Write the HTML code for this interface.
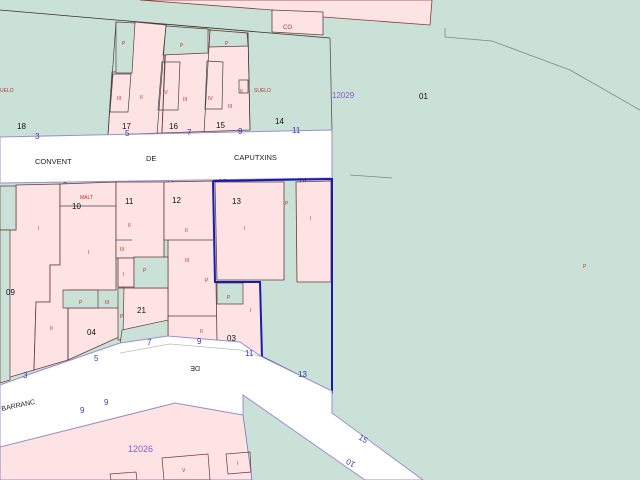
<!DOCTYPE html>
<html><head><meta charset="utf-8"><style>
html,body{margin:0;padding:0;width:640px;height:480px;overflow:hidden;background:#c9e1d6}
svg{display:block}
text{font-family:"Liberation Sans",sans-serif}
</style></head><body>
<svg width="640" height="480" viewBox="0 0 640 480" xmlns="http://www.w3.org/2000/svg">
<rect width="640" height="480" fill="#c9e1d6"/>
<polygon points="140,0 432,0 430,25 323,17 272,10" fill="#fde3e3" stroke="#8a3a3a" stroke-width="0.8"/>
<polygon points="272,10 323,12 323,35 272,32" fill="#fde3e3" stroke="#6a3a3a" stroke-width="0.8"/>
<text x="283" y="29" font-size="6" fill="#c03030">CO</text>
<polyline points="0,10 116,20 330,38" fill="none" stroke="#333" stroke-width="0.8"/>
<line x1="330" y1="38" x2="332" y2="130" stroke="#555" stroke-width="0.8"/>
<polyline points="445,28 445,37 492,41 570,70 640,110" fill="none" stroke="#7a8a8a" stroke-width="0.8"/>
<line x1="350" y1="175" x2="392" y2="178" stroke="#7a8a8a" stroke-width="0.8"/>
<g fill="#fde3e3" stroke="#6a3a3a" stroke-width="0.8">
<polygon points="135,22 166,25 162,133 108,135 112,72 128,72 130,50"/>
<polygon points="166,40 208,36 208,30 248,33 250,130 162,133"/>
</g>
<g fill="#c9e1d6" stroke="#6a3a3a" stroke-width="0.7">
<polygon points="116,22 135,23 132,73 116,73"/>
<polygon points="166,26 208,29 208,53 163,55"/>
<polygon points="210,30 247,33 248,46 209,47"/>
</g>
<g fill="none" stroke="#444" stroke-width="0.7">
<polygon points="113,74 131,74 128,112 110,112"/>
<polygon points="162,62 180,62 178,110 158,110"/>
<polygon points="207,61 223,62 222,109 205,109"/>
<polygon points="239,80 248,80 248,93 239,93"/>
<line x1="116" y1="22" x2="108" y2="135"/>
<line x1="166" y1="25" x2="157" y2="134"/>
<line x1="210" y1="29" x2="204" y2="133"/>
<line x1="248" y1="33" x2="250" y2="130"/>
</g>
<g font-size="5" fill="#c03030">
<text x="122" y="45">P</text><text x="180" y="47">P</text><text x="225" y="45">P</text>
<text x="117" y="100">III</text><text x="140" y="99">II</text><text x="163" y="94">IV</text><text x="183" y="101">III</text>
<text x="208" y="100">IV</text><text x="228" y="108">III</text><text x="240" y="93">II</text>
<text x="254" y="92">SUELO</text><text x="0" y="92">UELO</text>
</g>
<g font-size="8" fill="#111">
<text x="17" y="129">18</text><text x="122" y="129">17</text><text x="169" y="129">16</text>
<text x="216" y="128">15</text><text x="275" y="124">14</text><text x="419" y="99">01</text>
</g>
<text x="332" y="98" font-size="8" fill="#8a5ad0">12029</text>
<text x="583" y="268" font-size="5" fill="#c03030">P</text>
<polygon points="0,137 332,130 332,178 0,183" fill="#fff" stroke="#9a90d0" stroke-width="1"/>
<g font-size="7.5" fill="#222">
<text x="35" y="164">CONVENT</text><text x="146" y="161">DE</text><text x="234" y="160">CAPUTXINS</text>
</g>
<g font-size="8" fill="#3a3ab0">
<text x="35" y="139">3</text><text x="125" y="136">5</text><text x="187" y="135">7</text><text x="238" y="134">9</text><text x="292" y="133">11</text>
<text x="63" y="188">9</text><text x="133" y="188">9</text><text x="166" y="187">10</text><text x="218" y="185">12</text><text x="298" y="184">14</text>
</g>
<g fill="#fde3e3" stroke="#6a3a3a" stroke-width="0.8">
<polygon points="16,185 60,184 60,265 50,265 50,302 36,302 34,370 0,380 0,230 16,230"/>
<polygon points="60,184 116,182 116,290 68,290 68,360 34,370 36,302 50,302 50,265 60,265"/>
<polygon points="68,308 118,308 119,337 68,360"/>
<polygon points="116,182 164,182 164,258 116,258"/>
<polygon points="164,182 213,181 215,282 217,282 218,340 168,338 168,240 164,240"/>
<polygon points="122,288 168,288 168,334 122,340"/>
<polygon points="118,258 134,258 134,287 118,287"/>
<polygon points="216,282 260,282 262,357 240,343 217,340"/>
<polygon points="215,182 284,182 284,280 217,280"/>
<polygon points="296,182 331,181 331,282 297,282"/>
</g>
<g fill="#c9e1d6" stroke="#6a3a3a" stroke-width="0.7">
<polygon points="0,186 16,186 16,230 0,230"/>
<polygon points="63,290 98,290 98,308 63,308"/>
<polygon points="134,257 168,257 168,288 134,288"/>
<polygon points="217,283 243,283 243,304 217,304"/>
<polygon points="118,288 124,288 123,336 120,340 118,340"/>
<polygon points="122,330 168,320 168,338 120,345"/>
<polygon points="0,230 10,230 10,380 0,383"/>
</g>
<g fill="none" stroke="#444" stroke-width="0.7">
<line x1="60" y1="206" x2="116" y2="206"/><line x1="116" y1="240" x2="132" y2="240"/>
<line x1="168" y1="240" x2="213" y2="240"/><line x1="168" y1="316" x2="217" y2="316"/>
<line x1="68" y1="308" x2="68" y2="360"/>
</g>
<g font-size="5" fill="#c03030">
<text x="38" y="230">I</text><text x="88" y="254">I</text><text x="128" y="227">II</text><text x="185" y="232">II</text>
<text x="244" y="230">I</text><text x="285" y="205">P</text><text x="310" y="220">I</text><text x="80" y="199">MALT</text>
<text x="50" y="330">II</text><text x="120" y="251">III</text><text x="123" y="276">I</text><text x="143" y="272">P</text>
<text x="185" y="262">III</text><text x="205" y="282">P</text><text x="227" y="299">P</text><text x="250" y="312">I</text>
<text x="200" y="333">II</text><text x="79" y="304">P</text><text x="105" y="304">III</text><text x="120" y="318">P</text>
</g>
<g font-size="8" fill="#111">
<text x="72" y="209">10</text><text x="125" y="204">11</text><text x="172" y="203">12</text><text x="232" y="204">13</text>
<text x="6" y="295">09</text><text x="87" y="335">04</text><text x="137" y="313">21</text><text x="227" y="341">03</text>
</g>
<polyline points="213,181 332,179 332,392 262,357 260,282 215,282 213,181" fill="none" stroke="#1a1ab0" stroke-width="2"/>
<polygon points="0,447 175,403 243,415 252,480 0,480" fill="#fde3e3" stroke="#7a70c0" stroke-width="0.8"/>
<g fill="none" stroke="#6a3a3a" stroke-width="0.7">
<polygon points="162,458 208,454 210,480 164,480"/>
<polygon points="226,454 250,452 251,472 228,474"/>
<polygon points="110,474 136,472 137,480 111,480"/>
</g>
<text x="128" y="452" font-size="9" fill="#8a5ad0">12026</text>
<text x="182" y="472" font-size="5" fill="#c03030">V</text><text x="237" y="465" font-size="5" fill="#c03030">I</text>
<polygon points="0,385 36,372 120,343 168,336 240,342 262,357 332,391 332,413 423,480 365,480 243,395 243,415 175,403 0,447" fill="#fff" stroke="#9a90d0" stroke-width="1"/>
<polyline points="120,353 170,344 240,350 262,357" fill="none" stroke="#bbb" stroke-width="0.7"/>
<text x="2" y="411" font-size="7" fill="#222" transform="rotate(-12 2 411)">BARRANC</text>
<text x="200" y="370" font-size="7" fill="#222" transform="rotate(180 200 368)">DE</text>
<g font-size="8" fill="#3a3ab0">
<text x="23" y="378">3</text><text x="94" y="361">5</text><text x="147" y="345">7</text><text x="197" y="344">9</text>
<text x="245" y="356">11</text><text x="298" y="377">13</text><text x="80" y="413">9</text><text x="104" y="405">9</text>
<text x="358" y="439" transform="rotate(30 358 439)">15</text><text x="345" y="466" transform="rotate(210 350 463)">10</text>
</g>
</svg>
</body></html>
